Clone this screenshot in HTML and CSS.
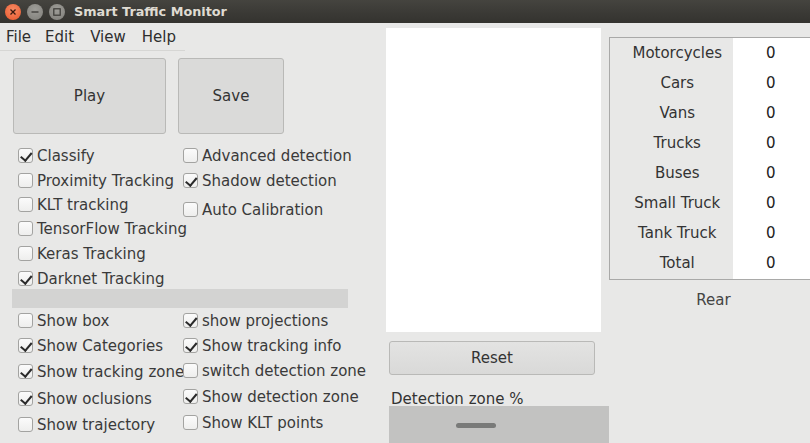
FILE: index.html
```html
<!DOCTYPE html>
<html>
<head>
<meta charset="utf-8">
<link rel="stylesheet" href="styles.css">
</head>
<body>
<div class="window">
  <div class="titlebar">
    <div class="wbtns">
      <span class="wbtn close"><svg width="16" height="16" viewBox="0 0 16 16"><path d="M5.5 5.5 L10.5 10.5 M10.5 5.5 L5.5 10.5" stroke="#3a1a10" stroke-width="1.3"/></svg></span>
      <span class="wbtn"><svg width="16" height="16" viewBox="0 0 16 16"><path d="M4.5 8 H11.5" stroke="#3b3a36" stroke-width="1.3"/></svg></span>
      <span class="wbtn"><svg width="16" height="16" viewBox="0 0 16 16"><rect x="4.8" y="4.8" width="6.4" height="6.4" fill="none" stroke="#3b3a36" stroke-width="1.2"/></svg></span>
    </div>
    <div class="title">Smart Traffic Monitor</div>
  </div>
  <div class="main">
    <div class="left">
      <div class="menubar"><span>File</span><span>Edit</span><span>View</span><span>Help</span></div>
      <div class="bigbtns">
        <div class="btn play">Play</div>
        <div class="btn save">Save</div>
      </div>
      <div class="checks top">
        <div class="col col-a">
          <label class="cb"><span class="box on"></span>Classify</label>
          <label class="cb"><span class="box"></span>Proximity Tracking</label>
          <label class="cb r23"><span class="box"></span>KLT tracking</label>
          <label class="cb"><span class="box"></span>TensorFlow Tracking</label>
          <label class="cb"><span class="box"></span>Keras Tracking</label>
          <label class="cb"><span class="box on"></span>Darknet Tracking</label>
        </div>
        <div class="col col-b">
          <label class="cb"><span class="box"></span>Advanced detection</label>
          <label class="cb"><span class="box on"></span>Shadow detection</label>
          <label class="cb spaced"><span class="box"></span>Auto Calibration</label>
        </div>
      </div>
      <div class="sepbar"></div>
      <div class="checks bottom">
        <div class="col col-a">
          <label class="cb"><span class="box"></span>Show box</label>
          <label class="cb"><span class="box on"></span>Show Categories</label>
          <label class="cb r27"><span class="box on"></span>Show tracking zone</label>
          <label class="cb r27"><span class="box on"></span>Show oclusions</label>
          <label class="cb"><span class="box"></span>Show trajectory</label>
        </div>
        <div class="col col-b">
          <label class="cb"><span class="box on"></span>show projections</label>
          <label class="cb"><span class="box on"></span>Show tracking info</label>
          <label class="cb"><span class="box"></span>switch detection zone</label>
          <label class="cb r27"><span class="box on"></span>Show detection zone</label>
          <label class="cb"><span class="box"></span>Show KLT points</label>
        </div>
      </div>
    </div>
    <div class="middle">
      <div class="view"></div>
      <div class="btn reset">Reset</div>
      <div class="zlabel">Detection zone %</div>
      <div class="slider"><span class="handle"></span></div>
    </div>
    <div class="right">
      <table class="counts">
        <tr><th>Motorcycles</th><td>0</td></tr>
        <tr><th>Cars</th><td>0</td></tr>
        <tr><th>Vans</th><td>0</td></tr>
        <tr><th>Trucks</th><td>0</td></tr>
        <tr><th>Buses</th><td>0</td></tr>
        <tr><th>Small Truck</th><td>0</td></tr>
        <tr><th>Tank Truck</th><td>0</td></tr>
        <tr class="last"><th>Total</th><td>0</td></tr>
      </table>
      <div class="rear">Rear</div>
    </div>
  </div>
</div>
</body>
</html>
```
FILE: styles.css
```css
* { box-sizing: border-box; }
html, body { margin: 0; padding: 0; }
body {
  width: 810px; height: 443px; overflow: hidden;
  background: #e8e8e7;
  font-family: "DejaVu Sans", sans-serif;
  font-size: 15px;
  color: #3c3c3c;
}
.window { width: 810px; height: 443px; overflow: hidden; }
.titlebar {
  height: 23px;
  background: linear-gradient(#45443f, #3a3935 60%, #34332f);
  display: flex; align-items: center;
}
.wbtns { display: flex; gap: 6px; padding-left: 5px; }
.wbtn {
  width: 16px; height: 16px; border-radius: 50%;
  background: radial-gradient(circle at 50% 35%, #9e9d98, #7f7e79);
  display: block;
}
.wbtn svg { display: block; }
.wbtn.close { background: radial-gradient(circle at 50% 35%, #f78a63, #e9572c); }
.title {
  margin-left: 9px;
  color: #dfdbd2;
  font-weight: bold;
  font-size: 12.8px;
}
.main { display: flex; height: 420px; }
.left { width: 386px; flex: none; }
.menubar {
  width: 185px; height: 28px;
  border-bottom: 1px solid #d6d6d4;
  display: flex; align-items: center;
  padding-left: 6px; gap: 14px;
  color: #2e2e2e;
}
.menubar span:nth-child(n+3) { margin-left: 2px; }
.bigbtns { display: flex; gap: 12px; padding-left: 13px; margin-top: 7px; }
.btn {
  background: #dadad9;
  border: 1px solid #b9b9b7;
  border-radius: 3px;
  display: flex; align-items: center; justify-content: center;
  color: #333;
}
.play { width: 153px; height: 76px; }
.save { width: 106px; height: 76px; }
.checks { display: grid; grid-template-columns: 165px 200px; padding-left: 18px; }
.checks.top { margin-top: 9px; }
.col { display: flex; flex-direction: column; }
.cb {
  height: 25px; display: flex; align-items: center;
  white-space: nowrap; color: #3a3a3a;
}
.cb.r23 { height: 23px; }
.cb.r27 { height: 27px; }
.cb.spaced { margin-top: 4px; }
.box {
  width: 15px; height: 15px; flex: none;
  border: 1px solid #a3a3a1;
  border-radius: 3px;
  background: linear-gradient(#fbfbfb, #eeeeed);
  margin-right: 4px;
  position: relative; z-index: 1;
}
.box.on::after {
  content: ""; position: absolute;
  left: 3.5px; top: 0.5px;
  width: 4.5px; height: 8.5px;
  border: solid #2a2a2a; border-width: 0 2.6px 2.6px 0;
  transform: rotate(40deg);
}
.sepbar { width: 336px; height: 19px; margin-left: 12px; background: #d3d3d2; margin-top: -2px; }
.checks.bottom { margin-top: 0; }
.middle { width: 223px; flex: none; }
.view { width: 215px; height: 304px; background: #fff; margin-top: 5px; }
.reset { width: 206px; height: 34px; margin-left: 3px; margin-top: 9px; background: linear-gradient(#e3e3e2, #d9d9d8); }
.zlabel { margin-left: 5px; margin-top: 15px; height: 16px; line-height: 18px; color: #333; }
.slider {
  width: 220px; height: 37px; margin-left: 3px;
  background: #c2c2c1;
  display: flex; justify-content: center;
  padding-top: 17px; padding-right: 46px;
}
.handle { width: 40px; height: 5px; border-radius: 3px; background: #797a79; display: block; }
.right { flex: 1; min-width: 0; overflow: hidden; }
.counts {
  margin-top: 14px; width: 206px;
  border-collapse: collapse;
  border: 1px solid #a9a9a8;
}
.counts th {
  width: 123px; height: 30px; padding: 0 0 0 12px;
  font-weight: normal; text-align: center;
  background: #e8e8e7; color: #333;
}
.counts td { background: #fff; text-align: center; padding: 0 5px 0 0; color: #222; }
.counts tr.last th { height: 32px; }
.rear { width: 201px; text-align: center; margin-top: 11px; padding-left: 8px; color: #444; }
```
